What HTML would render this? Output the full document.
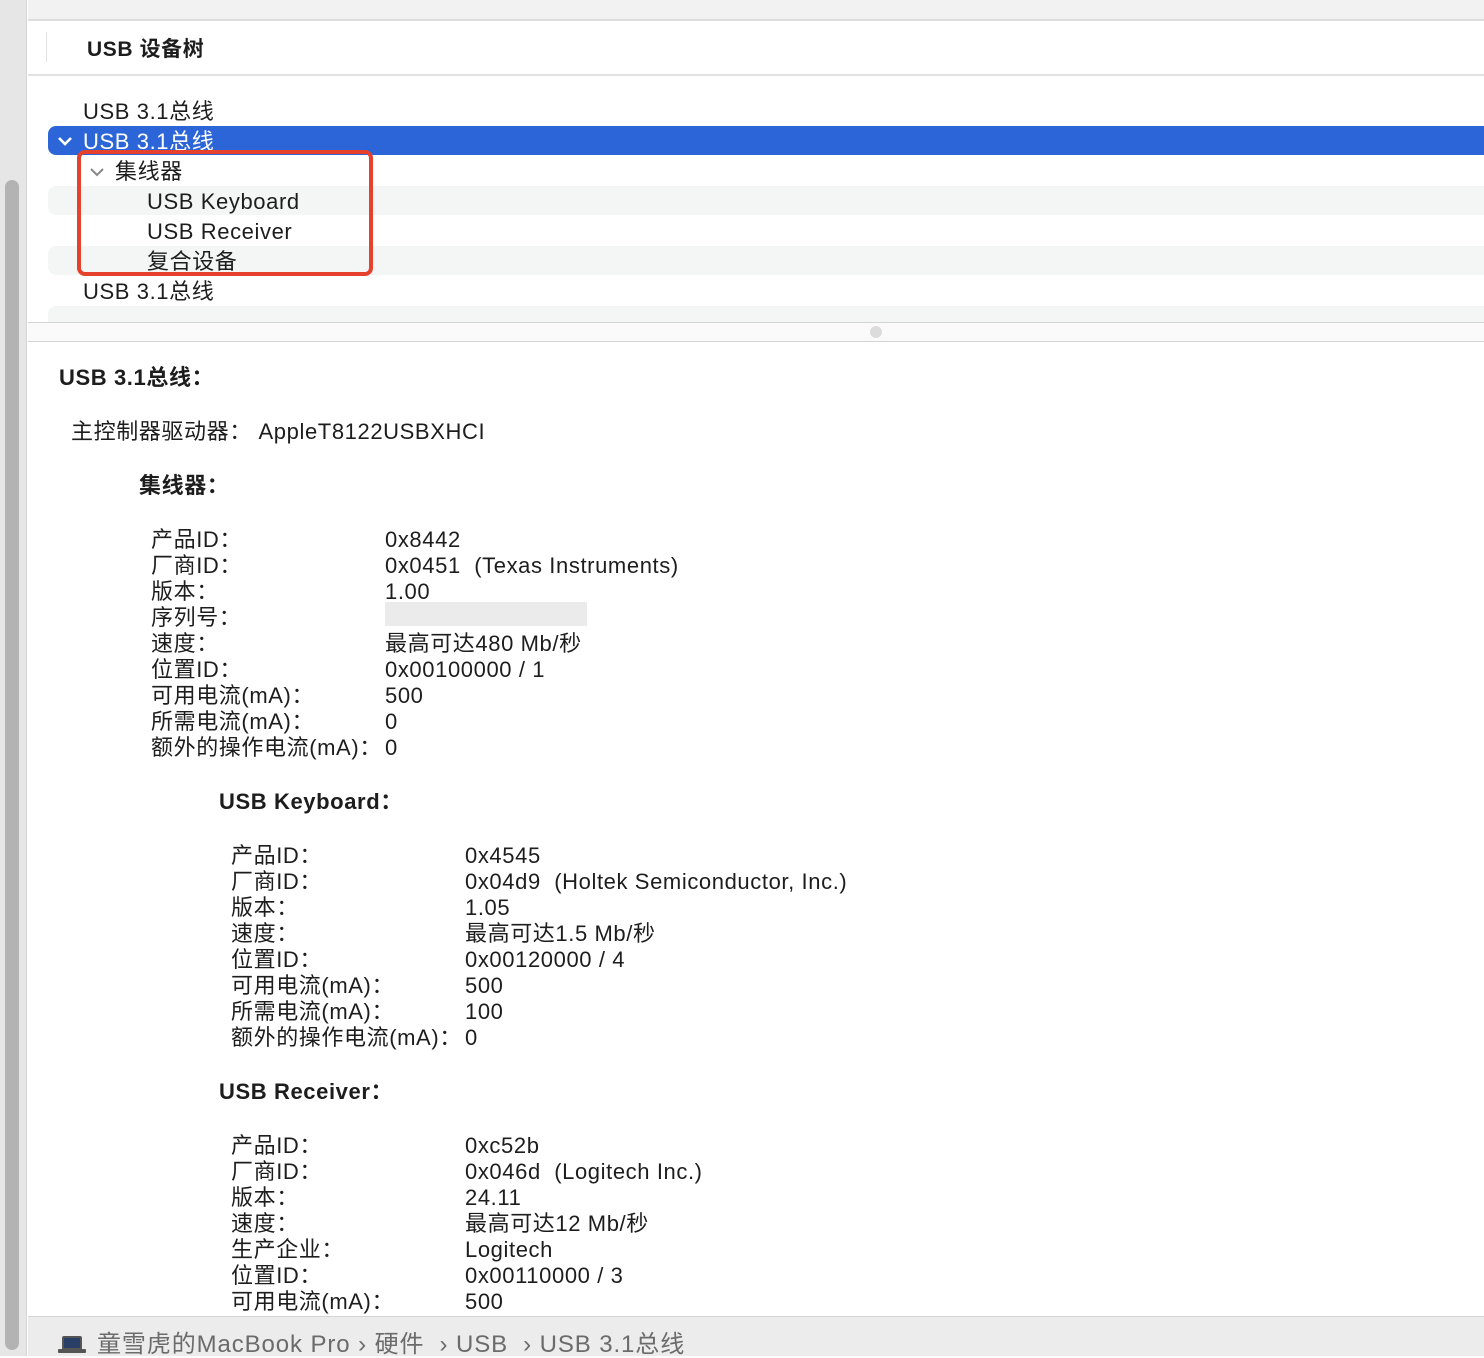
<!DOCTYPE html>
<html><head><meta charset="utf-8"><style>
*{margin:0;padding:0;box-sizing:border-box}
body{width:1484px;height:1356px;overflow:hidden;background:#fff;position:relative;font-family:"Liberation Sans","Noto Sans CJK SC",sans-serif;color:#1d1d1d;font-size:22px;letter-spacing:0.6px}
.a{position:absolute;white-space:nowrap;line-height:26px}
.b{font-weight:bold}
</style></head><body>
<div class="a" style="left:0;top:0;width:27px;height:1356px;background:#e6e6e6;border-right:1px solid #d6d6d6"></div>
<div class="a" style="left:5px;top:180px;width:14px;height:1170px;background:#b3b3b3;border-radius:7px"></div>
<div class="a" style="left:28px;top:0;width:1456px;height:21px;background:#f2f2f2;border-bottom:2px solid #dedede"></div>
<div class="a" style="left:46px;top:32px;width:1px;height:30px;background:#e0e0e0"></div>
<div class="a b" style="left:87px;top:37px;font-size:21px">USB 设备树</div>
<div class="a" style="left:28px;top:74px;width:1456px;height:2px;background:#e2e2e2"></div>
<div class="a" style="left:48px;top:186px;width:1436px;height:29px;background:#f4f5f5;border-radius:8px 0 0 8px"></div>
<div class="a" style="left:48px;top:246px;width:1436px;height:29px;background:#f4f5f5;border-radius:8px 0 0 8px"></div>
<div class="a" style="left:48px;top:306px;width:1436px;height:16px;background:#f4f5f5;border-radius:8px 0 0 0"></div>
<div class="a" style="left:48px;top:126px;width:1436px;height:29px;background:#2c65d8;border-radius:8px 0 0 8px"></div>
<div class="a" style="left:83px;top:99px">USB 3.1总线</div>
<svg class="a" style="left:56px;top:134px" width="18" height="14"><path d="M3 4 L9 10 L15 4" stroke="#fff" stroke-width="2.6" fill="none"/></svg>
<div class="a" style="left:83px;top:129px;color:#fff">USB 3.1总线</div>
<svg class="a" style="left:88px;top:165px" width="18" height="14"><path d="M3 4 L9 10 L15 4" stroke="#888" stroke-width="2" fill="none"/></svg>
<div class="a" style="left:115px;top:159px">集线器</div>
<div class="a" style="left:147px;top:189px">USB Keyboard</div>
<div class="a" style="left:147px;top:219px">USB Receiver</div>
<div class="a" style="left:147px;top:249px">复合设备</div>
<div class="a" style="left:83px;top:279px">USB 3.1总线</div>
<div class="a" style="left:77px;top:150px;width:296px;height:126px;border:4px solid #e5412d;border-radius:8px"></div>
<div class="a" style="left:28px;top:322px;width:1456px;height:20px;background:#fafafa;border-top:1px solid #d4d4d4;border-bottom:1px solid #d4d4d4"></div>
<div class="a" style="left:870px;top:326px;width:12px;height:12px;background:#dcdcdc;border-radius:6px"></div>
<div class="a b" style="left:59px;top:365px">USB 3.1总线：</div>
<div class="a" style="left:71px;top:419px">主控制器驱动器：&nbsp;AppleT8122USBXHCI</div>
<div class="a b" style="left:139px;top:473px">集线器：</div>
<div class="a" style="left:151px;top:527px">产品ID：<br>厂商ID：<br>版本：<br>序列号：<br>速度：<br>位置ID：<br>可用电流(mA)：<br>所需电流(mA)：<br>额外的操作电流(mA)：</div>
<div class="a" style="left:385px;top:527px">0x8442<br>0x0451&nbsp;&nbsp;(Texas Instruments)<br>1.00<br>&nbsp;<br>最高可达480 Mb/秒<br>0x00100000 / 1<br>500<br>0<br>0</div>
<div class="a" style="left:385px;top:602px;width:202px;height:24px;background:#ebebeb"></div>
<div class="a b" style="left:219px;top:789px">USB Keyboard：</div>
<div class="a" style="left:231px;top:843px">产品ID：<br>厂商ID：<br>版本：<br>速度：<br>位置ID：<br>可用电流(mA)：<br>所需电流(mA)：<br>额外的操作电流(mA)：</div>
<div class="a" style="left:465px;top:843px">0x4545<br>0x04d9&nbsp;&nbsp;(Holtek Semiconductor, Inc.)<br>1.05<br>最高可达1.5 Mb/秒<br>0x00120000 / 4<br>500<br>100<br>0</div>
<div class="a b" style="left:219px;top:1079px">USB Receiver：</div>
<div class="a" style="left:231px;top:1133px">产品ID：<br>厂商ID：<br>版本：<br>速度：<br>生产企业：<br>位置ID：<br>可用电流(mA)：</div>
<div class="a" style="left:465px;top:1133px">0xc52b<br>0x046d&nbsp;&nbsp;(Logitech Inc.)<br>24.11<br>最高可达12 Mb/秒<br>Logitech<br>0x00110000 / 3<br>500</div>
<div class="a" style="left:28px;top:1316px;width:1456px;height:40px;background:#ececec;border-top:1px solid #d4d4d4"></div>
<div class="a" style="left:62px;top:1336px;width:20px;height:14px;background:#2a3f66;border:2px solid #555;border-radius:2px"></div>
<div class="a" style="left:58px;top:1349px;width:28px;height:4px;background:#555;border-radius:1px"></div>
<div class="a" style="left:97px;top:1332px;color:#6b6b6b;font-size:24px;letter-spacing:0.9px">童雪虎的MacBook Pro › 硬件 &nbsp;› USB &nbsp;› USB 3.1总线</div>
</body></html>
